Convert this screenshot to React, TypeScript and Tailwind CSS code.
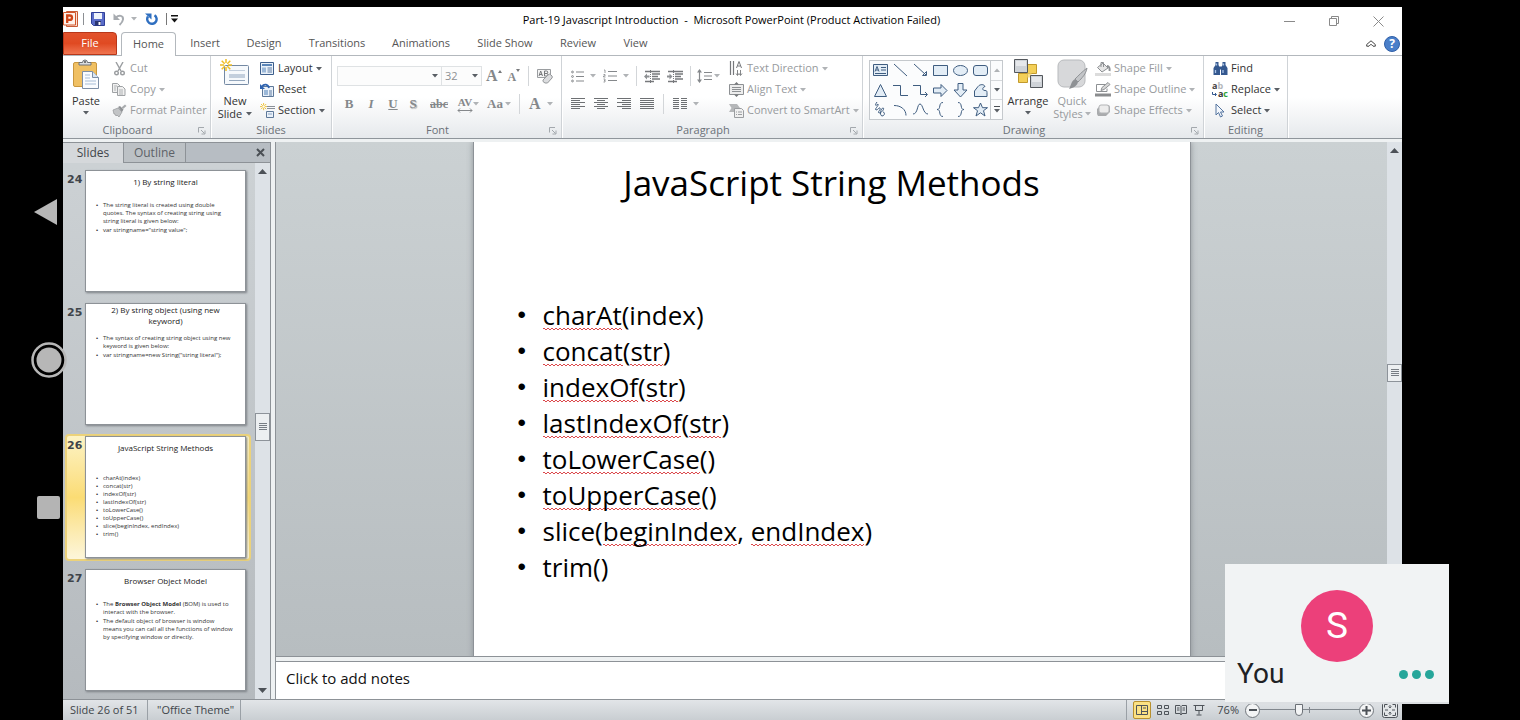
import React from "react";

type Kids = { children?: React.ReactNode };

/* ---------- small shared pieces ---------- */

const Caret = ({ dark = false }: { dark?: boolean }) => (
  <svg width="6" height="4" viewBox="0 0 6 4" className="shrink-0" aria-hidden="true">
    <path d="M0 0h6L3 3.5z" fill={dark ? "#5a5f65" : "#b0b3b6"} />
  </svg>
);

const Divider = () => <span className="h-5 w-px bg-[#d3d6d9]" />;

const Launcher = ({ label }: { label: string }) => (
  <button aria-label={label} className="absolute right-1 bottom-[3px]">
    <svg width="8" height="8" viewBox="0 0 8 8" fill="none" stroke="#a3a8ad" aria-hidden="true">
      <path d="M.5 5.500V.5H6M3 3l3.500 3.500M7 3.500V7H3.500" />
    </svg>
  </button>
);

const Group = ({
  title,
  width,
  launcher = true,
  children,
}: Kids & { title: string; width: string; launcher?: boolean }) => (
  <section
    aria-label={title}
    className={`relative flex shrink-0 flex-col border-r border-[#cfd3d7] pt-[2px] shadow-[1px_0_0_#fff] ${width}`}
  >
    <div className="flex h-16 items-start">{children}</div>
    <div
      className={`flex h-4 items-center justify-center text-[11px] text-[#6b7178] ${launcher ? "pr-[18px]" : ""}`}
    >
      {title}
    </div>
    {launcher && <Launcher label={`${title} options`} />}
  </section>
);

const SmallButton = ({
  icon,
  label,
  caret,
  enabled,
}: {
  icon: React.ReactNode;
  label: string;
  caret?: boolean;
  enabled?: boolean;
}) => (
  <button
    className={`flex h-[21px] items-center gap-[3px] whitespace-nowrap text-[11px] ${
      enabled ? "text-[#333]" : "text-[#979a9d]"
    }`}
  >
    <span className="flex w-4 shrink-0 justify-center">{icon}</span>
    <span>{label}</span>
    {caret && <Caret dark={enabled} />}
  </button>
);

const IconButton = ({ label, caret, children }: Kids & { label: string; caret?: boolean }) => (
  <button aria-label={label} className="flex h-5 items-center gap-1.5 text-[#77797c]">
    {children}
    {caret && <Caret />}
  </button>
);

/* ---------- icons ---------- */

const PowerPointLogo = () => (
  <svg width="16" height="16" viewBox="0 0 16 16" aria-hidden="true">
    <path d="M3.500.5h11v15h-11z" fill="#fbe1d3" stroke="#c75a35" />
    <path d="M.5 1.500h12v12.500H.5z" fill="#fdf1ea" stroke="#d2552a" />
    <path d="M4.200 12V4.500h2.600a2.200 2.200 0 0 1 0 4.400H4.500" fill="none" stroke="#cf4417" strokeWidth="2.300" />
  </svg>
);

const SaveIcon = () => (
  <svg width="14" height="14" viewBox="0 0 14 14" aria-hidden="true">
    <path d="M.5.5h13v13h-11l-2-2z" fill="#5a6cc8" stroke="#2f3f98" />
    <path d="M3 1h8v6H3z" fill="#eef3fb" />
    <path d="M4 9h6v4.500H4z" fill="#2a3470" />
    <path d="M7.500 10h2v3h-2z" fill="#fff" />
  </svg>
);

const UndoIcon = () => (
  <svg width="12" height="13" viewBox="0 0 12 13" fill="none" aria-hidden="true">
    <path d="M3 4.500C6 1.500 10.500 2.500 10 6.500 9.700 9 8 10.500 6.500 12" stroke="#a7abb0" strokeWidth="2" />
    <path d="M.5.5v6.500H7z" fill="#a7abb0" />
  </svg>
);

const RedoIcon = () => (
  <svg width="13" height="13" viewBox="0 0 13 13" fill="none" aria-hidden="true">
    <path d="M9.500 2.200A4.700 4.700 0 1 1 3 3.500" stroke="#2f6fc0" strokeWidth="2.400" />
    <path d="M0 .5h6.500v6z" fill="#2f6fc0" />
  </svg>
);

const PasteIcon = () => (
  <svg width="27" height="30" viewBox="0 0 27 30" aria-hidden="true">
    <rect x=".5" y="3.500" width="23" height="24" rx="1.500" fill="#f0c063" stroke="#c9973f" />
    <path d="M6 6V3.500h3.500a2.500 2.500 0 0 1 5 0H18V6z" fill="#d9dcdf" stroke="#6e7378" />
    <circle cx="12" cy="3" r="1" fill="#555" />
    <path d="M9.500 12.500h10l6 6v11h-16z" fill="#fafcff" stroke="#7d8fa6" />
    <path d="M19.500 12.500v6h6" fill="#dbe6f3" stroke="#7d8fa6" />
    <path d="M12 16h5M12 19h5M12 22h11M12 25h11" stroke="#a7bdd6" />
  </svg>
);

const CutIcon = () => (
  <svg width="11" height="14" viewBox="0 0 11 14" fill="none" stroke="#9a9da0" strokeWidth="1.400" aria-hidden="true">
    <path d="M2 0l5 9M9 0L4 9" />
    <circle cx="2.500" cy="11" r="1.800" />
    <circle cx="8.500" cy="11" r="1.800" />
  </svg>
);

const CopyIcon = () => (
  <svg width="14" height="13" viewBox="0 0 14 13" fill="#f0f0f0" stroke="#9fa2a5" aria-hidden="true">
    <path d="M.5.5h5l2.500 2.500v6.500H.5z" />
    <path d="M5.500 3.500h5l2.500 2.500v6.500H5.500z" />
    <path d="M7 7h4M7 9h4M7 11h4M2 3h3M2 5h2M2 7h2" strokeWidth=".8" />
  </svg>
);

const BrushIcon = () => (
  <svg width="15" height="13" viewBox="0 0 15 13" aria-hidden="true">
    <path d="M1 6l5-2 4 4-3 5-2-2-1 1-1-2-1 0z" fill="#c2c4c6" stroke="#9a9da0" strokeWidth=".8" />
    <path d="M6 3l2-1 3.500 3.500L10 8z" fill="#8e9194" />
    <path d="M9.500 3.500L13 .5l1.500 1.500-3.500 3z" fill="#a7aaad" />
  </svg>
);

const Spark = () => (
  <path
    d="M6 0v4M6 8v4M0 6h4M8 6h4M1.700 1.700l3 3M7.300 7.300l3 3M1.700 10.300l3-3M7.300 4.700l3-3"
    stroke="#f0bf26"
    strokeWidth="1.500"
  />
);

const NewSlideIcon = () => (
  <svg width="30" height="28" viewBox="0 0 30 28" aria-hidden="true">
    <rect x="4.500" y="6.500" width="24" height="19" rx="1" fill="#f6f9fc" stroke="#7489a3" />
    <path d="M9 11h16v1H9zM9 15h16v4H9z" fill="#c3cfdd" />
    <path d="M9 21h16v1H9z" fill="#93a6bc" />
    <Spark />
  </svg>
);

const LayoutIcon = () => (
  <svg width="14" height="13" viewBox="0 0 14 13" aria-hidden="true">
    <path d="M.5.5h13v12H.5z" fill="#eaf1f9" stroke="#3d5f8c" />
    <path d="M2 2h10v2H2z" fill="#5c86b8" />
    <path d="M2 5.500h4v5H2z" fill="#9bb8d8" />
    <path d="M7.500 6h4.500M7.500 8h4.500M7.500 10h4.500" stroke="#5f7da3" />
  </svg>
);

const ResetIcon = () => (
  <svg width="14" height="14" viewBox="0 0 14 14" aria-hidden="true">
    <path d="M2.500 3.500h11v10h-11z" fill="#eaf1f9" stroke="#5d7899" />
    <path d="M4 7h4v5H4z" fill="#9bb8d8" />
    <path d="M9 8h3M9 10h3M9 12h3" stroke="#5f7da3" />
    <path d="M2 3.500C4 .5 8 1 9 5" fill="none" stroke="#2d62b0" strokeWidth="1.800" />
    <path d="M0 1v5h5z" fill="#2d62b0" />
  </svg>
);

const SectionIcon = () => (
  <svg width="15" height="15" viewBox="0 0 15 15" aria-hidden="true">
    <g transform="scale(.6)">
      <Spark />
    </g>
    <path d="M7 3.500h8M7 5.500h8" stroke="#8a9099" />
    <path d="M6.500 8.500h7v6h-7z" fill="#eaf1f9" stroke="#5d7899" />
    <path d="M8 11h4" stroke="#8ba5c4" />
  </svg>
);

const BulletsIcon = () => (
  <svg width="13" height="13" viewBox="0 0 13 13" stroke="#85888b" fill="none" aria-hidden="true">
    <path d="M5 2h8M5 6.500h8M5 11h8" />
    <circle cx="1.500" cy="2" r=".9" />
    <circle cx="1.500" cy="6.500" r=".9" />
    <circle cx="1.500" cy="11" r=".9" />
  </svg>
);

const NumberingIcon = () => (
  <svg width="14" height="14" viewBox="0 0 14 14" stroke="#85888b" fill="none" aria-hidden="true">
    <path d="M5 2.500h9M5 7h9M5 11.500h9" />
    <path d="M1 1h1v3M.5 5.500h1.500v1.500H.5v1h2M.5 10h1.500v3H.5M1 11.500h1" strokeWidth=".8" />
  </svg>
);

const IndentIcon = ({ inward = false }: { inward?: boolean }) => (
  <svg width="16" height="13" viewBox="0 0 16 13" stroke="#77797c" fill="none" aria-hidden="true">
    <path d="M1 1.500h15M8 4h8M8 6.500h6M8 9h8M1 11.500h9" strokeWidth="1.300" />
    <path d="M6.500 0v13" strokeDasharray="1 1" />
    <path
      d={inward ? "M5.500 6.500L2.500 3.500v2H0v2h2.500v2z" : "M0 6.500l3-3v2h2.500v2H3v2z"}
      fill="#8d9093"
      stroke="none"
    />
  </svg>
);

const SpacingIcon = () => (
  <svg width="15" height="14" viewBox="0 0 15 14" stroke="#85888b" fill="none" aria-hidden="true">
    <path d="M7 3.500h8M7 7h8M7 10.500h8M2.500 1v12" strokeWidth="1.200" />
    <path d="M2.500 0L0 3.500h5zM2.500 14L0 10.500h5z" fill="#85888b" stroke="none" />
  </svg>
);

const AlignIcon = ({ d }: { d: string }) => (
  <svg width="14" height="12" viewBox="0 0 14 12" stroke="#6d7073" fill="none" aria-hidden="true">
    <path d={d} />
  </svg>
);

const TextDirectionIcon = () => (
  <svg width="15" height="15" viewBox="0 0 15 15" stroke="#77797c" fill="none" aria-hidden="true">
    <path d="M1.500 0v14M4.500 0v14" strokeWidth="1.200" />
    <path d="M7.500 7l2.500-6.500L12.500 7M8.500 5h3" />
    <path d="M8.500 9v5M11.500 9v5M7 12.500l1.500 2 1.500-2M10 12.500l1.500 2 1.500-2" strokeWidth=".9" />
  </svg>
);

const AlignTextIcon = () => (
  <svg width="15" height="15" viewBox="0 0 15 15" stroke="#8d9093" fill="none" aria-hidden="true">
    <path d="M.5 2.500h14v10H.5z" fill="#ededed" />
    <path d="M3 5.500h9M3 7.500h9M3 9.500h9" />
    <path d="M7.500 0L5 2.500h5zM7.500 15L5 12.500h5z" fill="#77797c" stroke="none" />
  </svg>
);

const SmartArtIcon = () => (
  <svg width="15" height="15" viewBox="0 0 15 15" stroke="#9a9da0" fill="none" aria-hidden="true">
    <path d="M0 1h8l3 4-3 4H0l2.500-4z" fill="#b5b7b9" stroke="none" />
    <path d="M5.500 5.500h7l2 2v7h-9z" fill="#f0f0f0" />
    <path d="M7 9h1M9 9h4M7 11.500h1M9 11.500h4" />
  </svg>
);

const ClearFormatIcon = () => (
  <svg width="16" height="15" viewBox="0 0 16 15" aria-hidden="true">
    <path d="M.5.5h13v8H.5z" fill="#f4f4f4" stroke="#9a9da0" />
    <path d="M2 7l1.700-5L5.500 7M2.500 5.500h2.500M7.500 2v5h2.500a1.300 1.300 0 0 0 0-2.500H7.500h2a1.200 1.200 0 0 0 0-2.500z" fill="none" stroke="#77797c" />
    <path d="M6 11l5-5a2 2 0 0 1 3 0l1 1a2 2 0 0 1 0 2l-4.500 5H8l-2-1.500z" fill="#dcdddf" stroke="#95989b" />
  </svg>
);

const ArrangeIcon = () => (
  <svg width="30" height="30" viewBox="0 0 30 30" aria-hidden="true">
    <path d="M14.500 5.500h9v9h-9zM5.500 14.500h9v9h-9z" fill="#f3cf57" stroke="#c29a2d" />
    <path d="M14.500 14.500h4v4h-4z" fill="#f9e08b" />
    <path d="M1.500.5h13v13h-13zM17.500 16.500h12v12h-12z" fill="#cfd3d8" stroke="#53575c" />
    <path d="M3 2h10v5H3zM19 18h9v5h-9z" fill="#e6e8eb" />
  </svg>
);

const QuickStylesIcon = () => (
  <svg width="31" height="31" viewBox="0 0 31 31" aria-hidden="true">
    <rect x="1" y="1" width="27" height="27" rx="6" fill="#d7d8da" stroke="#b8babd" />
    <path d="M30 9c-1 6-5 10-9 14l-3-3c4-4 7-7 12-11z" fill="#c3c5c8" stroke="#8f9295" />
    <path d="M18 20l3 3c-1 4-5 6-9 7 2-3 2-8 6-10z" fill="#8e9194" />
  </svg>
);

const FillIcon = () => (
  <svg width="16" height="16" viewBox="0 0 16 16" fill="none" stroke="#8d9093" aria-hidden="true">
    <path d="M2.500 6.500L8 2l5 5-6 4z" fill="#e6e6e6" />
    <path d="M6 6V1.500h2.500V6" />
    <path d="M12 5c2 0 3 2 2.500 5" strokeWidth="2" />
    <path d="M0 12h16v3H0z" fill="#dcdcdc" stroke="none" />
  </svg>
);

const OutlineIcon = () => (
  <svg width="16" height="15" viewBox="0 0 16 15" fill="none" stroke="#8d9093" aria-hidden="true">
    <path d="M12 6.500v3H1.500v-7H10" />
    <path d="M6 8.500l1-3 6-5 2 2-6 5z" fill="#d8d8d8" />
    <path d="M0 11.500h16v3H0z" fill="#8a8c8e" stroke="none" />
  </svg>
);

const EffectsIcon = () => (
  <svg width="15" height="13" viewBox="0 0 15 13" aria-hidden="true">
    <path d="M1 5l4-4h8l1 2v5l-4 4H2l-1-2z" fill="#a9abad" />
    <rect x="3" y="1" width="10" height="8" rx="2" fill="#ececec" stroke="#b3b5b7" />
  </svg>
);

const FindIcon = () => (
  <svg width="15" height="13" viewBox="0 0 15 13" aria-hidden="true">
    <path d="M2.500 0h3v3l1.500 3v7H.5V6l2-3zM9.500 0h3v3l2 3v7H8V6l1.500-3zM6 4.500h3v3H6z" fill="#34588f" />
    <path d="M2.500 8v3M10 8v3M3.500 1.500v2M10.500 1.500v2" stroke="#a9c3e6" strokeWidth="1.300" />
  </svg>
);

const ReplaceIcon = () => (
  <span className="relative flex h-4 w-4 flex-col text-[9px] leading-2 font-bold">
    <span className="text-left text-[#444]">
      a<span className="text-[#b4b7ba]">b</span>
    </span>
    <span className="text-right text-[#333]">
      a<span className="text-[#2fa33b]">c</span>
    </span>
    <svg width="5" height="5" viewBox="0 0 5 5" className="absolute bottom-px left-0" aria-hidden="true">
      <path d="M.5 0v2.500H4M3 1l1.500 1.500L3 4" fill="none" stroke="#34588f" />
    </svg>
  </span>
);

const SelectIcon = () => (
  <svg width="10" height="15" viewBox="0 0 10 15" aria-hidden="true">
    <path d="M1 1v11l2.500-2.500L5.500 14l2-1-2-4H9z" fill="#f4f8fd" stroke="#54749f" />
  </svg>
);

const shapes: { name: string; d: string; fill?: boolean }[] = [
  { name: "Text box", d: "M.5 1.500h14v11H.5zM2 8.500L4 3.500l2 5M3 7h2M8 4.500h5M8 7h5M2 10.500h11", fill: true },
  { name: "Line", d: "M1 1l13 12" },
  { name: "Arrow", d: "M1 1l12 11M13.500 8.500v4h-4z" },
  { name: "Rectangle", d: "M.5 2.500h14v10H.5z", fill: true },
  { name: "Oval", d: "M14.500 7.500a7 5 0 1 1-14 0a7 5 0 1 1 14 0z", fill: true },
  { name: "Rounded rectangle", d: "M3 2.500h9a2.500 2.500 0 0 1 2.500 2.500v5a2.500 2.500 0 0 1-2.500 2.500H3A2.500 2.500 0 0 1 .5 10V5A2.500 2.500 0 0 1 3 2.500z", fill: true },
  { name: "Triangle", d: "M7.500 1.500l6 12h-12z", fill: true },
  { name: "Elbow connector", d: "M0 2.500h7.500v10H15" },
  { name: "Elbow arrow connector", d: "M0 2.500h7.500v9H14M12 9l2.500 2.500L12 14" },
  { name: "Right arrow", d: "M.5 5v5H8v3.500l6-6-6-6V5z", fill: true },
  { name: "Down arrow", d: "M5 .5h5V7h4l-6.500 7L1 7h4z", fill: true },
  { name: "Freeform", d: "M5 3.500C7 1 11 1 12 3.500c-3 1-3 4 0 4 2 0 2 1 2 2v4H1.500V8z", fill: true },
  { name: "Scribble", d: "M4 0C1 4 3 4 5 2c1 2-4 5-2 6 2 0 3-3 4-2 1 2-3 4-1 5 3 0 6-5 4-5s-4 7-1 8c3 0 3-4 1-4" },
  { name: "Arc", d: "M1 3.500c7 0 12 4 12 10" },
  { name: "Curve", d: "M0 12c5 0 4-10 7-10s3 10 8 10" },
  { name: "Left brace", d: "M10 .5C5 .5 8.500 7.500 4 7.500c4.500 0 1 7 6 7" },
  { name: "Right brace", d: "M5 .5c5 0 1.500 7 6 7-4.500 0-1 7-6 7" },
  { name: "Star", d: "M7.500 1l2 4.700h5l-4 3 1.500 5.300-4.500-3.200L3 14l1.500-5.300-4-3h5z", fill: true },
];

/* ---------- window header ---------- */

const TitleBar = () => (
  <header className="flex h-6 shrink-0 items-center bg-white">
    <div className="flex flex-1 items-center">
      <PowerPointLogo />
      <span className="ml-1 h-3 w-px bg-[#8c8f93]" />
      <button aria-label="Save" className="ml-[7px]">
        <SaveIcon />
      </button>
      <button aria-label="Undo" className="ml-2 flex items-center gap-1.5">
        <UndoIcon />
        <Caret />
      </button>
      <button aria-label="Redo" className="ml-2">
        <RedoIcon />
      </button>
      <button aria-label="Customize toolbar" className="ml-2 flex items-center gap-1">
        <span className="h-3 w-px bg-[#777]" />
        <svg width="7" height="8" viewBox="0 0 7 8" aria-hidden="true">
          <path d="M0 0h7v1.500H0zM0 3.500h7L3.500 7.500z" fill="#111" />
        </svg>
      </button>
    </div>
    <h1 className="ml-4 pt-0.5 text-[11px] whitespace-pre text-black">
      {"Part-19 Javascript Introduction  -  Microsoft PowerPoint (Product Activation Failed)"}
    </h1>
    <div className="flex flex-1 items-center justify-end gap-[34px] pt-1 pr-[18px]">
      <button aria-label="Minimize">
        <svg width="11" height="11" viewBox="0 0 11 11" stroke="#8a8a8a" aria-hidden="true">
          <path d="M0 5.500h11" />
        </svg>
      </button>
      <button aria-label="Restore">
        <svg width="10" height="10" viewBox="0 0 10 10" fill="none" stroke="#8a8a8a" aria-hidden="true">
          <path d="M.5 2.500h7v7h-7zM2.500 2.500v-2h7v7h-2" />
        </svg>
      </button>
      <button aria-label="Close">
        <svg width="11" height="11" viewBox="0 0 11 11" stroke="#8a8a8a" aria-hidden="true">
          <path d="M.5.5l10 10M10.500.5l-10 10" />
        </svg>
      </button>
    </div>
  </header>
);

const ribbonTabs: [string, string][] = [
  ["Insert", "w-[58px]"],
  ["Design", "w-[60px]"],
  ["Transitions", "w-[86px]"],
  ["Animations", "w-[82px]"],
  ["Slide Show", "w-[86px]"],
  ["Review", "w-[60px]"],
  ["View", "w-[55px]"],
];

const TabStrip = () => (
  <nav className="flex h-[25px] shrink-0 items-stretch border-b border-[#b3b8bd] bg-white pt-px text-[11px] text-[#555]">
    <button className="w-[54px] rounded-tr-sm border border-[#b8371a] bg-linear-to-b from-[#e2522c] via-[#e04a22] to-[#f0744f] text-white">
      File
    </button>
    <button className="-mb-px ml-1 w-[55px] rounded-t-sm border border-b-0 border-[#b3b8bd] bg-white">Home</button>
    {ribbonTabs.map(([name, width]) => (
      <button key={name} className={width}>
        {name}
      </button>
    ))}
    <div className="ml-auto flex items-center gap-2 pr-0.5">
      <button aria-label="Collapse ribbon">
        <svg width="10" height="7" viewBox="0 0 10 7" fill="none" stroke="#444" aria-hidden="true">
          <path d="M.7 4.500L5 .8l4.300 3.700v1.700H7L5 4.200 3 6.200H.7z" />
        </svg>
      </button>
      <button
        aria-label="Help"
        className="flex size-4 items-center justify-center rounded-full border border-[#2f5fa8] bg-[#4a7fc9] text-[12px] font-bold text-white"
      >
        ?
      </button>
    </div>
  </nav>
);

/* ---------- ribbon ---------- */

const LargeButton = ({ icon, children, muted, width }: Kids & { icon: React.ReactNode; muted?: boolean; width: string }) => (
  <button
    className={`flex shrink-0 flex-col items-center text-[11px] leading-[13px] ${width} ${
      muted ? "text-[#979a9d]" : "text-[#333]"
    }`}
  >
    <span className="flex h-9 items-start justify-center pt-px">{icon}</span>
    {children}
  </button>
);

const serif = "font-['Liberation_Serif',serif] font-bold text-[#85888b]";

const Ribbon = () => (
  <div className="flex h-[83px] shrink-0 overflow-hidden border-b border-[#8f959b] bg-linear-to-b from-white from-50% to-[#e6e9ec]">
    <Group title="Clipboard" width="w-[148px]">
      <LargeButton width="w-[46px]" icon={<PasteIcon />}>
        <span>Paste</span>
        <span className="flex h-3 items-center">
          <Caret dark />
        </span>
      </LargeButton>
      <div className="ml-0.5 flex flex-col">
        <SmallButton icon={<CutIcon />} label="Cut" />
        <SmallButton icon={<CopyIcon />} label="Copy" caret />
        <SmallButton icon={<BrushIcon />} label="Format Painter" />
      </div>
    </Group>

    <Group title="Slides" width="w-[121px]" launcher={false}>
      <LargeButton width="w-12" icon={<NewSlideIcon />}>
        <span>New</span>
        <span className="flex items-center gap-1">
          Slide <Caret dark />
        </span>
      </LargeButton>
      <div className="flex flex-col">
        <SmallButton icon={<LayoutIcon />} label="Layout" caret enabled />
        <SmallButton icon={<ResetIcon />} label="Reset" enabled />
        <SmallButton icon={<SectionIcon />} label="Section" caret enabled />
      </div>
    </Group>

    <Group title="Font" width="w-[230px]">
      <div className="flex w-full flex-col gap-2 px-[5px] pt-2">
        <div className="flex h-5 items-center">
          <span className="relative flex">
            <select aria-label="Font name" className="h-5 w-[105px] appearance-none border border-[#dfe2e4] bg-[#fcfcfc]" />
            <span className="pointer-events-none absolute top-2 right-1">
              <Caret dark />
            </span>
          </span>
          <span className="relative flex">
            <select
              aria-label="Font size"
              className="h-5 w-10 appearance-none border border-l-0 border-[#dfe2e4] bg-[#fcfcfc] pl-[3px] text-[11px] text-[#8d9093]"
            >
              <option>32</option>
            </select>
            <span className="pointer-events-none absolute top-2 right-1">
              <Caret dark />
            </span>
          </span>
          <button aria-label="Grow font" className={`ml-1 flex items-start text-[16px] leading-5 ${serif}`}>
            A
            <svg width="4" height="3" viewBox="0 0 4 3" className="mt-1" aria-hidden="true">
              <path d="M0 3h4L2 0z" fill="#77797c" />
            </svg>
          </button>
          <button aria-label="Shrink font" className={`ml-1.5 flex items-start pt-0.5 text-[12px] leading-5 ${serif}`}>
            A
            <svg width="4" height="3" viewBox="0 0 4 3" className="mt-0.5" aria-hidden="true">
              <path d="M0 0h4L2 3z" fill="#77797c" />
            </svg>
          </button>
          <span className="mx-2 flex">
            <Divider />
          </span>
          <button aria-label="Clear formatting">
            <ClearFormatIcon />
          </button>
        </div>
        <div className={`flex h-5 items-center text-[13px] ${serif}`}>
          <button aria-label="Bold" className="w-6">
            B
          </button>
          <button aria-label="Italic" className="w-5 italic">
            I
          </button>
          <button aria-label="Underline" className="w-6 underline">
            U
          </button>
          <button aria-label="Shadow" className="w-4 [text-shadow:1px_1px_1px_#aaa]">
            S
          </button>
          <button aria-label="Strikethrough" className="w-9 text-[12px] line-through">
            abc
          </button>
          <button aria-label="Character spacing" className="flex w-[30px] items-center text-[11px]">
            <span className="flex flex-col items-center leading-3">
              AV
              <svg width="16" height="5" viewBox="0 0 16 5" fill="none" stroke="#85888b" aria-hidden="true">
                <path d="M1 2.500h14M3 .5l-2 2 2 2M13 .5l2 2-2 2" />
              </svg>
            </span>
            <Caret />
          </button>
          <button aria-label="Change case" className="flex w-8 items-center gap-0.5">
            Aa
            <Caret />
          </button>
          <Divider />
          <button aria-label="Font color" className="ml-[9px] flex items-center gap-1.5 text-[16px]">
            A
            <Caret />
          </button>
        </div>
      </div>
    </Group>

    <Group title="Paragraph" width="w-[301px]">
      <div className="flex w-[158px] shrink-0 flex-col gap-2 pt-2 pl-[9px]">
        <div className="flex h-5 items-center gap-[7px]">
          <IconButton label="Bullets" caret>
            <BulletsIcon />
          </IconButton>
          <IconButton label="Numbering" caret>
            <NumberingIcon />
          </IconButton>
          <Divider />
          <IconButton label="Decrease indent">
            <IndentIcon />
          </IconButton>
          <IconButton label="Increase indent">
            <IndentIcon inward />
          </IconButton>
          <Divider />
          <button aria-label="Line spacing" className="flex items-center gap-0.5">
            <SpacingIcon />
            <Caret />
          </button>
        </div>
        <div className="flex h-5 items-center gap-[9px]">
          <IconButton label="Align left">
            <AlignIcon d="M0 .5h14M0 2.500h9M0 4.500h14M0 6.500h9M0 8.500h14M0 10.500h9" />
          </IconButton>
          <IconButton label="Center">
            <AlignIcon d="M0 .5h14M3 2.500h8M0 4.500h14M3 6.500h8M0 8.500h14M3 10.500h8" />
          </IconButton>
          <IconButton label="Align right">
            <AlignIcon d="M0 .5h14M5 2.500h9M0 4.500h14M5 6.500h9M0 8.500h14M5 10.500h9" />
          </IconButton>
          <IconButton label="Justify">
            <AlignIcon d="M0 .5h14M0 2.500h14M0 4.500h14M0 6.500h14M0 8.500h14M0 10.500h14" />
          </IconButton>
          <Divider />
          <IconButton label="Columns" caret>
            <AlignIcon d="M0 .5h6M8 .5h6M0 2.500h6M8 2.500h6M0 4.500h6M8 4.500h6M0 6.500h6M8 6.500h6M0 8.500h6M8 8.500h6M0 10.500h6M8 10.500h6" />
          </IconButton>
        </div>
      </div>
      <div className="ml-2 flex flex-col">
        <SmallButton icon={<TextDirectionIcon />} label="Text Direction" caret />
        <SmallButton icon={<AlignTextIcon />} label="Align Text" caret />
        <SmallButton icon={<SmartArtIcon />} label="Convert to SmartArt" caret />
      </div>
    </Group>

    <Group title="Drawing" width="w-[341px]">
      <div className="mt-0.5 ml-[6px] flex h-[60px] shrink-0 border border-[#c5c9cd] bg-[#fbfcfd]">
        <div className="grid grid-cols-6 content-between">
          {shapes.map((s) => (
            <button key={s.name} aria-label={s.name} className="flex h-[19px] w-5 items-center justify-center">
              <svg
                width="15"
                height="15"
                viewBox="0 0 15 15"
                fill={s.fill ? "#e3edf6" : "none"}
                stroke="#3f5d80"
                aria-hidden="true"
              >
                <path d={s.d} />
              </svg>
            </button>
          ))}
        </div>
        <div className="flex w-3 flex-col divide-y divide-[#d5d8db] border-l border-[#c5c9cd]">
          <button aria-label="Scroll shapes up" className="flex flex-1 items-center justify-center">
            <svg width="6" height="4" viewBox="0 0 6 4" aria-hidden="true">
              <path d="M0 4h6L3 .5z" fill="#b0b3b6" />
            </svg>
          </button>
          <button aria-label="Scroll shapes down" className="flex flex-1 items-center justify-center">
            <Caret dark />
          </button>
          <button aria-label="More shapes" className="flex flex-1 flex-col items-center justify-center gap-0.5">
            <span className="h-px w-1.5 bg-[#4a4f55]" />
            <Caret dark />
          </button>
        </div>
      </div>
      <div className="ml-1 flex">
        <LargeButton width="w-[42px]" icon={<ArrangeIcon />}>
          <span>Arrange</span>
          <span className="flex h-3 items-center">
            <Caret dark />
          </span>
        </LargeButton>
        <LargeButton width="w-[46px]" icon={<QuickStylesIcon />} muted>
          <span>Quick</span>
          <span className="flex items-center gap-0.5">
            Styles <Caret />
          </span>
        </LargeButton>
      </div>
      <div className="flex flex-col">
        <SmallButton icon={<FillIcon />} label="Shape Fill" caret />
        <SmallButton icon={<OutlineIcon />} label="Shape Outline" caret />
        <SmallButton icon={<EffectsIcon />} label="Shape Effects" caret />
      </div>
    </Group>

    <Group title="Editing" width="w-[84px]" launcher={false}>
      <div className="ml-2 flex flex-col">
        <SmallButton icon={<FindIcon />} label="Find" enabled />
        <SmallButton icon={<ReplaceIcon />} label="Replace" caret enabled />
        <SmallButton icon={<SelectIcon />} label="Select" caret enabled />
      </div>
    </Group>
  </div>
);

/* ---------- slides pane ---------- */

const ScrollArrow = ({ up = false }: { up?: boolean }) => (
  <svg width="9" height="5" viewBox="0 0 9 5" aria-hidden="true">
    <path d={up ? "M0 5h9L4.500 0z" : "M0 0h9L4.500 5z"} fill="#4c5157" />
  </svg>
);

const ScrollThumb = ({ size }: { size: string }) => (
  <span className={`flex flex-col items-center justify-center gap-px border border-[#8d939a] bg-[#eceff1] ${size}`}>
    {[0, 1, 2, 3].map((i) => (
      <span key={i} className="h-px w-2 bg-[#777d84]" />
    ))}
  </span>
);

const Thumb = ({
  n,
  title,
  titleClass = "pt-[5px]",
  selected,
  children,
}: Kids & { n: number; title: string; titleClass?: string; selected?: boolean }) => (
  <li
    className={`flex h-[127px] shrink-0 rounded-sm border-2 ${
      selected
        ? "border-[#ecd27a] bg-linear-to-b from-[#fdf3c4] via-[#fbdc74] to-[#fdf6da]"
        : "border-transparent"
    }`}
  >
    <span className="w-[18px] shrink-0 pt-1 text-[11px] leading-3 font-bold text-[#3f444a] font-['DejaVu_Sans',sans-serif]">
      {n}
    </span>
    <article className="h-[122px] w-[161px] shrink-0 border border-[#8d9297] bg-white text-[6px] leading-2 text-[#333] shadow-[1px_1px_2px_#7d8287]">
      <h2 className={`h-[30px] px-4 text-center text-[8px] leading-[11px] text-[#222] ${titleClass}`}>{title}</h2>
      {children}
    </article>
  </li>
);

const ThumbItem = ({ children }: Kids) => (
  <li className="flex">
    <span className="w-[7px] shrink-0 font-['Liberation_Sans',sans-serif]">•</span>
    <span>{children}</span>
  </li>
);

const methods: [string, boolean][][] = [
  [["charAt", true], ["(index)", false]],
  [["concat", true], ["(", false], ["str", true], [")", false]],
  [["indexOf", true], ["(", false], ["str", true], [")", false]],
  [["lastIndexOf", true], ["(", false], ["str", true], [")", false]],
  [["toLowerCase", true], ["()", false]],
  [["toUpperCase", true], ["()", false]],
  [["slice(", false], ["beginIndex", true], [", ", false], ["endIndex", true], [")", false]],
  [["trim()", false]],
];

const SlidesPane = () => (
  <aside className="flex w-[208px] shrink-0 flex-col border-r border-[#8d9297] bg-linear-to-b from-[#cdd2d5] to-[#b5babe]">
    <div className="flex h-[21px] shrink-0 items-stretch border-t border-[#8d9297] text-[12px] text-[#40454a]">
      <button className="w-[61px] border-r border-[#8d9297] bg-[#d5d8db]">Slides</button>
      <button className="w-[62px] border-r border-b border-[#8d9297] bg-[#bcc1c5] text-[#5d6268]">Outline</button>
      <div className="flex flex-1 items-center justify-end border-b border-[#8d9297] bg-[#b7bdc3] pr-[5px]">
        <button aria-label="Close pane">
          <svg width="9" height="9" viewBox="0 0 9 9" stroke="#4a4f55" strokeWidth="2" aria-hidden="true">
            <path d="M1 1l7 7M8 1L1 8" />
          </svg>
        </button>
      </div>
    </div>
    <div className="flex min-h-0 flex-1">
      <ol className="flex flex-1 flex-col gap-[6px] overflow-hidden pt-[5px] pr-1 pl-[2px]">
        <Thumb n={24} title="1) By string literal">
          <ul className="flex flex-col gap-px pr-4 pl-[10px]">
            <ThumbItem>The string literal is created using double quotes. The syntax of creating string using string literal is given below:</ThumbItem>
            <ThumbItem>var stringname="string value";</ThumbItem>
          </ul>
        </Thumb>
        <Thumb n={25} title="2) By string object (using new keyword)" titleClass="">
          <ul className="flex flex-col gap-px pr-2 pl-[10px]">
            <ThumbItem>The syntax of creating string object using new keyword is given below:</ThumbItem>
            <ThumbItem>var stringname=new String("string literal");</ThumbItem>
          </ul>
        </Thumb>
        <Thumb n={26} title="JavaScript String Methods" selected>
          <ul className="flex flex-col pt-[7px] pl-[10px]">
            {methods.map((m, i) => (
              <ThumbItem key={i}>{m.map((p) => p[0]).join("")}</ThumbItem>
            ))}
          </ul>
        </Thumb>
        <Thumb n={27} title="Browser Object Model">
          <ul className="flex flex-col gap-px pr-3 pl-[10px]">
            <ThumbItem>
              The <b>Browser Object Model</b> (BOM) is used to interact with the browser.
            </ThumbItem>
            <ThumbItem>The default object of browser is window means you can call all the functions of window by specifying window or directly.</ThumbItem>
          </ul>
        </Thumb>
      </ol>
      <div className="flex w-[15px] flex-col items-center bg-[#dde2e7] py-1.5">
        <ScrollArrow up />
        <span className="grow-[237]" />
        <ScrollThumb size="h-7 w-[15px]" />
        <span className="grow-[245]" />
        <ScrollArrow />
      </div>
    </div>
  </aside>
);

/* ---------- editor ---------- */

/* Two offset rows of dashes form the spell checker's zigzag. */
const squiggle =
  "bg-[linear-gradient(90deg,#dc4a4d_50%,transparent_50%),linear-gradient(90deg,transparent_50%,#dc4a4d_50%)] bg-repeat-x [background-size:4px_1px] [background-position:0_calc(100%-4px),0_calc(100%-3px)]";

const Editor = () => (
  <main className="flex min-w-0 flex-1 flex-col border-l border-[#8d9297]">
    <div className="flex min-h-0 flex-1 border-b border-[#8d9297]">
      <div className="flex min-w-0 flex-1 justify-center overflow-hidden bg-linear-to-b from-[#cbd1d3] to-[#b7bdc0]">
        <article className="h-[537px] w-[718px] shrink-0 border border-t-0 border-[#8d9297] bg-white text-black shadow-[0_0_6px_#8d9297]">
          <h2 className="flex h-[82px] items-center justify-center text-[35px]">JavaScript String Methods</h2>
          <ul className="mt-[73px] pl-[44px] text-[26px] leading-9">
            {methods.map((m, i) => (
              <li key={i} className="flex">
                <span className="w-[25px] font-['Liberation_Sans',sans-serif] text-[24px]">•</span>
                <span className="whitespace-pre">
                  {m.map(([text, misspelt], j) => (
                    <span key={j} className={misspelt ? squiggle : undefined}>
                      {text}
                    </span>
                  ))}
                </span>
              </li>
            ))}
          </ul>
        </article>
      </div>
      <div className="flex w-[15px] flex-col items-center bg-[#dde2e7] py-1.5">
        <ScrollArrow up />
        <span className="grow-[212]" />
        <ScrollThumb size="h-[18px] w-[15px]" />
        <span className="grow-[270]" />
      </div>
    </div>
    <div className="mt-1 flex h-[38px] shrink-0 border-t border-[#8d9297] bg-white">
      <textarea
        aria-label="Notes"
        defaultValue="Click to add notes"
        className="flex-1 resize-none pt-[6px] pl-[10px] text-[15px] leading-5 text-[#111]"
      />
    </div>
  </main>
);

/* ---------- status bar ---------- */

const ViewIcon = ({ d }: { d: string }) => (
  <svg width="12" height="12" viewBox="0 0 12 12" fill="none" stroke="#4f545a" aria-hidden="true">
    <path d={d} />
  </svg>
);

const StatusBar = () => (
  <footer className="flex h-[21px] shrink-0 items-center border-t border-[#8d9297] bg-linear-to-b from-[#e2e5e8] to-[#c9ced2] text-[11px] text-[#40454a]">
    <span className="w-[84px] pl-[7px]">Slide 26 of 51</span>
    <span className="h-full w-px bg-[#9aa0a6]" />
    <span className="w-[92px] pl-[9px]">"Office Theme"</span>
    <span className="h-full w-px bg-[#9aa0a6]" />
    <div className="ml-auto flex items-center gap-[6px] pr-1">
      <span className="h-5 w-px bg-[#9aa0a6]" />
      <button
        aria-label="Normal view"
        className="flex h-[18px] w-[18px] items-center justify-center rounded-xs border border-[#b8902f] bg-[#fbe184]"
      >
        <ViewIcon d="M.5 1.500h11v9H.5zM5.500 1.500v9M5.500 7.500h6M7 4h3" />
      </button>
      <button aria-label="Slide sorter">
        <ViewIcon d="M.5 1.500h4v3h-4zM7.500 1.500h4v3h-4zM.5 7.500h4v3h-4zM7.500 7.500h4v3h-4z" />
      </button>
      <button aria-label="Reading view">
        <ViewIcon d="M.5 1.500H5l1 1 1-1h4.500v8H7l-1 1.500-1-1.500H.5zM6 2.500v8M2 4h2.500M2 6h2.500M7.500 4H10M7.500 6H10" />
      </button>
      <button aria-label="Slide show">
        <ViewIcon d="M.5 1.500h11M2.500 2v4.500h7V2M6 6.500v4M3.500 11h5" />
      </button>
      <span className="ml-1.5">76%</span>
      <div className="flex items-center">
        <button
          aria-label="Zoom out"
          className="flex size-[15px] items-center justify-center rounded-full border border-[#70767c] bg-[#f3f4f5]"
        >
          <span className="h-0.5 w-2 bg-[#4c5157]" />
        </button>
        <input
          type="range"
          aria-label="Zoom"
          min={0}
          max={100}
          defaultValue={38}
          className="h-3 w-[99px] appearance-none bg-[linear-gradient(#81878d,#81878d),linear-gradient(#81878d,#81878d)] bg-no-repeat [background-position:0_5px,49px_3px] [background-size:100%_1px,1px_6px] [&::-webkit-slider-thumb]:h-3 [&::-webkit-slider-thumb]:w-2 [&::-webkit-slider-thumb]:appearance-none [&::-webkit-slider-thumb]:rounded-b-md [&::-webkit-slider-thumb]:border [&::-webkit-slider-thumb]:border-[#6b7076] [&::-webkit-slider-thumb]:bg-[#f3f4f5]"
        />
        <button
          aria-label="Zoom in"
          className="flex size-[15px] items-center justify-center rounded-full border border-[#70767c] bg-[#f3f4f5]"
        >
          <svg width="9" height="9" viewBox="0 0 9 9" stroke="#4c5157" strokeWidth="2" aria-hidden="true">
            <path d="M0 4.500h9M4.500 0v9" />
          </svg>
        </button>
      </div>
      <button aria-label="Fit to window" className="ml-0.5">
        <svg width="16" height="16" viewBox="0 0 16 16" fill="none" stroke="#4f545a" aria-hidden="true">
          <rect x=".5" y=".5" width="15" height="15" rx="2" fill="#e3e6e8" />
          <path d="M2.500 5.500v-3h3M10.500 2.500h3v3M13.500 10.500v3h-3M5.500 13.500h-3v-3M8 3v3M8 13v-3M3 8h3M13 8h-3" />
          <path d="M6.500 4.500L8 6l1.500-1.500M6.500 11.500L8 10l1.500 1.500" strokeWidth=".8" />
        </svg>
      </button>
    </div>
  </footer>
);

/* ---------- device frame ---------- */

const DeviceNav = () => (
  <nav aria-label="Device navigation" className="z-10 flex w-[63px] shrink-0 flex-col justify-center gap-28 pb-2 pl-[31px]">
    <button aria-label="Back" className="flex size-9 items-center pl-[3px]">
      <svg width="23" height="26" viewBox="0 0 23 26" aria-hidden="true">
        <path d="M23 0v26L0 13z" fill="#b7b7b7" />
      </svg>
    </button>
    <button aria-label="Home" className="flex size-9 items-center">
      <svg width="36" height="36" viewBox="0 0 36 36" className="shrink-0" aria-hidden="true">
        <circle cx="18" cy="18" r="16.500" fill="#000" stroke="#b7b7b7" strokeWidth="2.500" />
        <circle cx="18" cy="18" r="12.500" fill="#b7b7b7" />
      </svg>
    </button>
    <button aria-label="Recent apps" className="flex size-9 items-center pl-1.5">
      <span className="size-[23px] rounded-xs bg-[#b4b4b4]" />
    </button>
  </nav>
);

const CallTile = () => (
  <section
    aria-label="Call preview"
    className="absolute right-[71px] bottom-4 z-20 flex h-[140px] w-[224px] flex-col items-center border-b-2 border-[#dcdfe2] bg-[#f1f3f4] px-3 pt-[26px] font-[Roboto,sans-serif]"
  >
    <div className="flex size-[72px] items-center justify-center rounded-full bg-[#ec407a] text-[37px] text-white">S</div>
    <div className="flex w-full items-center justify-between pr-[3px] text-[28px] leading-6 text-[#202124]">
      <span>You</span>
      <button aria-label="More options" className="flex gap-1">
        <span className="size-[9px] rounded-full bg-[#26a69a]" />
        <span className="size-[9px] rounded-full bg-[#26a69a]" />
        <span className="size-[9px] rounded-full bg-[#26a69a]" />
      </button>
    </div>
  </section>
);

export default function App() {
  return (
    <div className="relative flex h-screen overflow-hidden bg-black pt-[7px] pr-[118px] font-['Open_Sans',sans-serif]">
      <DeviceNav />
      <div className="flex min-w-0 flex-1 flex-col bg-[#c5cacd]">
        <TitleBar />
        <TabStrip />
        <Ribbon />
        <div className="flex min-h-0 flex-1 gap-1 bg-[#eef1f2] pt-[3px]">
          <SlidesPane />
          <Editor />
        </div>
        <StatusBar />
      </div>
      <CallTile />
    </div>
  );
}
